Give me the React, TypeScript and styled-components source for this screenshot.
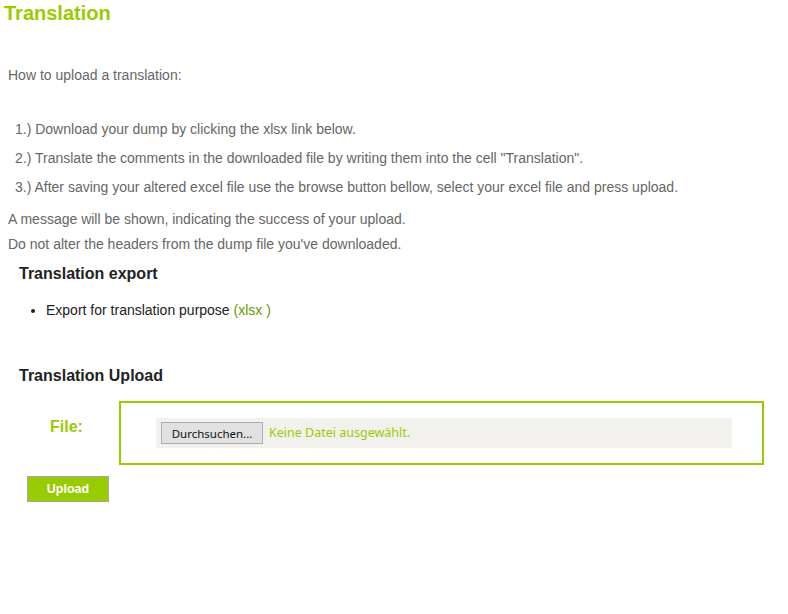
import { createGlobalStyle, styled } from "styled-components";

const GlobalStyle = createGlobalStyle`
  body {
    margin: 0;
    background: #ffffff;
    font-family: "Liberation Sans", Arial, sans-serif;
  }
`;

const Page = styled.div`
  width: 788px;
  min-height: 614px;
  background: #ffffff;
`;

const Title = styled.h1`
  margin: 0;
  padding: 0 4px;
  font-size: 20px;
  line-height: 26px;
  font-weight: 700;
  color: #99cc00;
`;

const Content = styled.div`
  padding: 0 8px;
  color: #666666;
  font-size: 14px;
`;

const Text = styled.p<{ $top: number; $lh?: number }>`
  margin: ${p => p.$top}px 0 0;
  line-height: ${p => p.$lh ?? 20}px;
`;

const Steps = styled.ol`
  margin: 30px 0 0;
  padding: 0 0 0 7px;
  list-style: none;
  line-height: 29px;
`;

const Section = styled.section<{ $top: number }>`
  margin-top: ${p => p.$top}px;
  padding-left: 11px;
`;

const Heading = styled.h2`
  margin: 0;
  font-size: 16px;
  line-height: 20px;
  font-weight: 700;
  color: #222222;
`;

const Exports = styled.ul`
  margin: 16px 0 0;
  padding-left: 27px;
  line-height: 20px;
  color: #222222;
  list-style: disc;
`;

const Link = styled.a`
  color: #669900;
  text-decoration: none;
`;

const FormRow = styled.div`
  display: flex;
  margin-top: 15px;
`;

const Label = styled.label`
  width: 100px;
  box-sizing: border-box;
  padding: 16px 0 0 31px;
  font-size: 16px;
  line-height: 20px;
  font-weight: 700;
  color: #99cc00;
`;

const FileBox = styled.div`
  width: 645px;
  box-sizing: border-box;
  border: 2px solid #99cc00;
  padding: 15px 30px 15px 35px;
`;

const FileStrip = styled.div`
  height: 30px;
  box-sizing: border-box;
  padding: 4px 5px;
  background: #f2f1ed;
  display: flex;
  align-items: flex-start;
  gap: 6px;
  font-family: "Noto Sans", "DejaVu Sans", sans-serif;
`;

const BrowseButton = styled.button`
  width: 102px;
  height: 22px;
  box-sizing: border-box;
  border: 1px solid #adadad;
  background: #e1e1e1;
  color: #111111;
  font-family: inherit;
  font-size: 11.5px;
  padding: 0;
`;

const FileName = styled.span`
  font-size: 12.5px;
  line-height: 22px;
  color: #99cc00;
`;

const UploadButton = styled.button`
  margin: 11px 0 0 19px;
  width: 82px;
  height: 26px;
  box-sizing: border-box;
  border: 1px solid #a6a6a6;
  background: #99cc00;
  color: #ffffff;
  font-family: "Liberation Sans", Arial, sans-serif;
  font-size: 12.5px;
  font-weight: 700;
  padding: 0;
`;

export default function App() {
  return (
    <Page>
      <GlobalStyle />
      <Title>Translation</Title>
      <Content>
        <Text $top={39}>How to upload a translation:</Text>
        <Steps>
          <li>1.) Download your dump by clicking the xlsx link below.</li>
          <li>
            2.) Translate the comments in the downloaded file by writing them into the cell
            "Translation".
          </li>
          <li>
            3.) After saving your altered excel file use the browse button bellow, select your
            excel file and press upload.
          </li>
        </Steps>
        <Text $top={5} $lh={25}>
          A message will be shown, indicating the success of your upload.
          <br />
          Do not alter the headers from the dump file you've downloaded.
        </Text>
        <Section $top={7}>
          <Heading>Translation export</Heading>
          <Exports>
            <li>
              Export for translation purpose <Link href="#">(xlsx )</Link>
            </li>
          </Exports>
        </Section>
        <Section $top={46}>
          <Heading>Translation Upload</Heading>
          <FormRow>
            <Label>File:</Label>
            <FileBox>
              <FileStrip>
                <BrowseButton>Durchsuchen...</BrowseButton>
                <FileName>Keine Datei ausgewählt.</FileName>
              </FileStrip>
            </FileBox>
          </FormRow>
        </Section>
        <UploadButton>Upload</UploadButton>
      </Content>
    </Page>
  );
}
